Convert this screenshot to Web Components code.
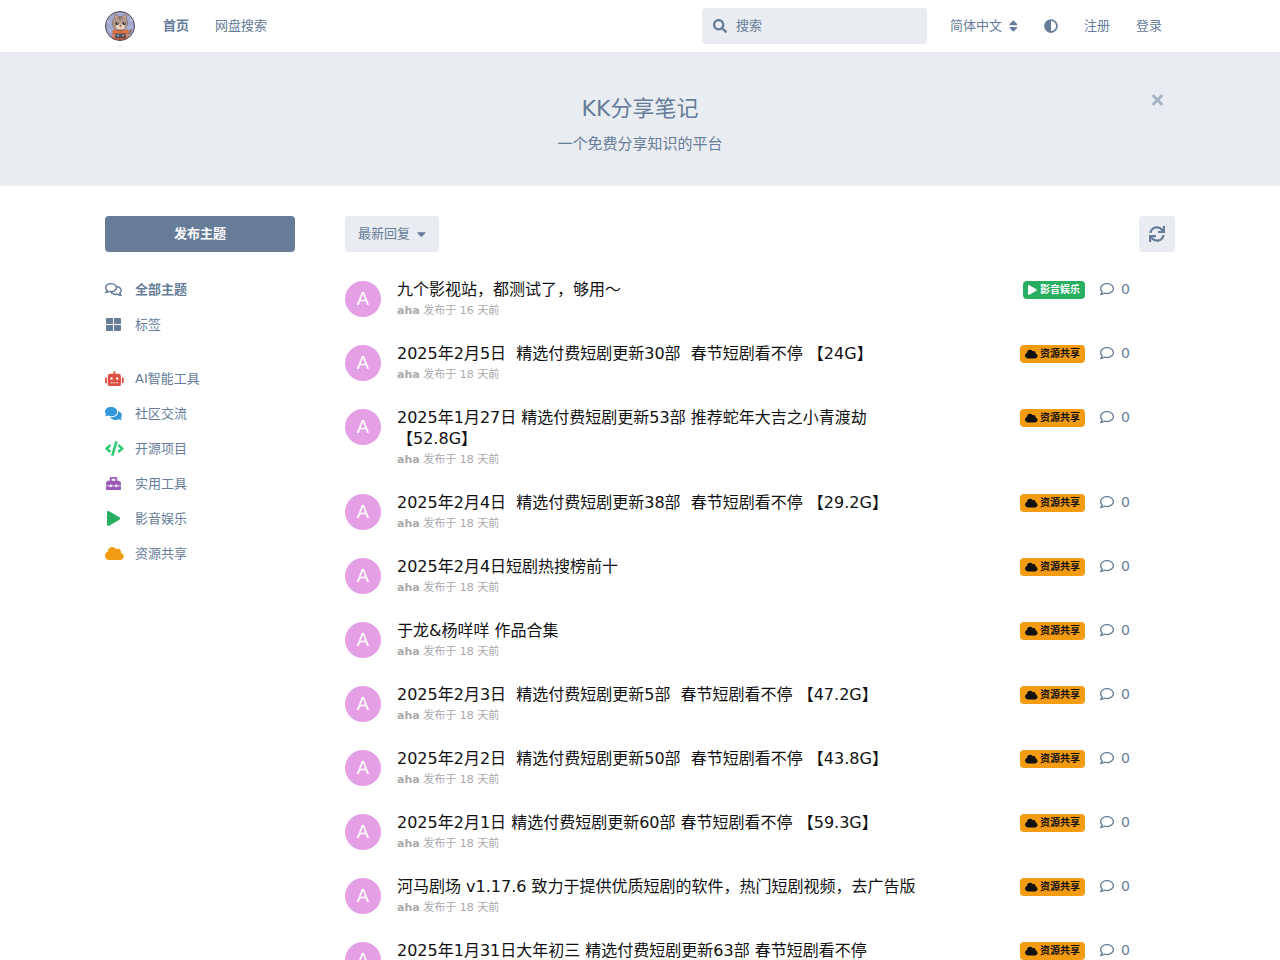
<!DOCTYPE html>
<html lang="zh-Hans">
<head>
<meta charset="utf-8">
<meta name="viewport" content="width=device-width, initial-scale=1">
<title>KK分享笔记</title>
<style>
:root {
  --primary: #667c99;
  --control: #e9ecf1;
  --heading: #111;
  --faint: #aaa;
}
body {
  margin: 0;
  background: #fff;
  color: var(--primary);
  font: 13px/20px "DejaVu Sans", "Noto Sans CJK SC", sans-serif;
}
</style>
</head>
<body>
<site-header>
  <nav-link slot="nav" href="#home" active>首页</nav-link>
  <nav-link slot="nav" href="#search">网盘搜索</nav-link>
  <search-box slot="tools" label="搜索"></search-box>
  <pick-list slot="tools" label="语言" options="简体中文" icon="sort"></pick-list>
  <icon-button slot="tools" icon="adjust" label="切换主题"></icon-button>
  <nav-link slot="tools" href="#signup">注册</nav-link>
  <nav-link slot="tools" href="#login">登录</nav-link>
</site-header>

<welcome-hero>
  <span slot="title">KK分享笔记</span>
  <span slot="text">一个免费分享知识的平台</span>
</welcome-hero>

<forum-layout>
  <forum-sidebar slot="side">
    <side-link icon="comments-o" href="#all" active>全部主题</side-link>
    <side-link icon="grid" href="#tags">标签</side-link>
    <side-link slot="tags" icon="robot" tint="#de4f42" href="#ai">AI智能工具</side-link>
    <side-link slot="tags" icon="comments" tint="#3498db" href="#talk">社区交流</side-link>
    <side-link slot="tags" icon="code" tint="#2ecc71" href="#open">开源项目</side-link>
    <side-link slot="tags" icon="toolbox" tint="#9b59b6" href="#tools">实用工具</side-link>
    <side-link slot="tags" icon="play" tint="#27ae60" href="#media">影音娱乐</side-link>
    <side-link slot="tags" icon="cloud" tint="#f39c12" href="#share">资源共享</side-link>
  </forum-sidebar>
  <list-toolbar></list-toolbar>
  <discussion-item tag="影音娱乐" days="16">九个影视站，都测试了，够用～</discussion-item>
  <discussion-item tag="资源共享" days="18">2025年2月5日&nbsp; 精选付费短剧更新30部&nbsp; 春节短剧看不停 【24G】</discussion-item>
  <discussion-item tag="资源共享" days="18">2025年1月27日 精选付费短剧更新53部 推荐蛇年大吉之小青渡劫 【52.8G】</discussion-item>
  <discussion-item tag="资源共享" days="18">2025年2月4日&nbsp; 精选付费短剧更新38部&nbsp; 春节短剧看不停 【29.2G】</discussion-item>
  <discussion-item tag="资源共享" days="18">2025年2月4日短剧热搜榜前十</discussion-item>
  <discussion-item tag="资源共享" days="18">于龙&amp;杨咩咩 作品合集</discussion-item>
  <discussion-item tag="资源共享" days="18">2025年2月3日&nbsp; 精选付费短剧更新5部&nbsp; 春节短剧看不停 【47.2G】</discussion-item>
  <discussion-item tag="资源共享" days="18">2025年2月2日&nbsp; 精选付费短剧更新50部&nbsp; 春节短剧看不停 【43.8G】</discussion-item>
  <discussion-item tag="资源共享" days="18">2025年2月1日 精选付费短剧更新60部 春节短剧看不停 【59.3G】</discussion-item>
  <discussion-item tag="资源共享" days="18">河马剧场 v1.17.6 致力于提供优质短剧的软件，热门短剧视频，去广告版</discussion-item>
  <discussion-item tag="资源共享" days="18">2025年1月31日大年初三 精选付费短剧更新63部 春节短剧看不停</discussion-item>
</forum-layout>

<script>
const ICONS = {
  search: [512, 'M505 442.7L405.3 343c-4.5-4.5-10.6-7-17-7H372c27.6-35.3 44-79.7 44-128C416 93.1 322.9 0 208 0S0 93.1 0 208s93.1 208 208 208c48.3 0 92.7-16.4 128-44v16.3c0 6.4 2.5 12.5 7 17l99.7 99.7c9.4 9.4 24.6 9.4 33.9 0l28.3-28.3c9.4-9.4 9.4-24.6.1-34zM208 336c-70.7 0-128-57.2-128-128 0-70.7 57.2-128 128-128 70.7 0 128 57.2 128 128 0 70.7-57.2 128-128 128z'],
  sort: [320, 'M41 288h238c21.4 0 32.1 25.9 17 41L177 448c-9.4 9.4-24.6 9.4-33.9 0L24 329c-15.1-15.1-4.4-41 17-41zm255-105L177 64c-9.4-9.4-24.6-9.4-33.9 0L24 183c-15.1 15.1-4.4 41 17 41h238c21.4 0 32.1-25.9 17-41z'],
  caret: [320, 'M31.3 192h257.3c17.8 0 26.7 21.5 14.1 34.1L174.1 354.8c-7.8 7.8-20.5 7.8-28.3 0L17.2 226.1C4.6 213.5 13.5 192 31.3 192z'],
  adjust: [512, 'M8 256c0 137 111 248 248 248s248-111 248-248S393 8 256 8 8 119 8 256zm248 184V72c101.7 0 184 82.3 184 184 0 101.7-82.3 184-184 184z'],
  times: [352, 'M242.72 256l100.07-100.07c12.28-12.28 12.28-32.19 0-44.48l-22.24-22.24c-12.28-12.28-32.19-12.28-44.48 0L176 189.28 75.93 89.21c-12.28-12.28-32.19-12.28-44.48 0L9.21 111.45c-12.28 12.28-12.28 32.19 0 44.48L109.28 256 9.21 356.07c-12.28 12.28-12.28 32.19 0 44.48l22.24 22.24c12.28 12.28 32.2 12.28 44.48 0L176 322.72l100.07 100.07c12.28 12.28 32.2 12.28 44.48 0l22.24-22.24c12.28-12.28 12.28-32.19 0-44.48L242.72 256z'],
  'comments-o': [576, 'M532 386.2c27.5-27.1 44-61.1 44-98.2 0-80-76.5-146.1-176.2-157.9C368.3 72.5 294.3 32 208 32 93.1 32 0 103.6 0 192c0 37 16.5 71 44 98.2-15.3 30.7-37.3 54.5-37.7 54.9-6.3 6.7-8.1 16.5-4.4 25 3.6 8.5 12 14 21.2 14 53.5 0 96.7-20.2 125.2-38.8 9.2 2.1 18.7 3.7 28.4 4.9C208.1 407.6 281.8 448 368 448c20.8 0 40.8-2.4 59.8-6.8C456.3 459.7 499.4 480 553 480c9.2 0 17.5-5.5 21.2-14 3.6-8.5 1.9-18.3-4.4-25-.4-.3-22.5-24.1-37.8-54.8zm-392.8-92.3L122.1 305c-14.1 9.1-28.5 16.3-43.1 21.4 2.7-4.7 5.4-9.7 8-14.8l15.5-31.1L77.7 256C64.2 242.6 48 220.7 48 192c0-60.7 73.3-112 160-112s160 51.3 160 112-73.3 112-160 112c-16.5 0-33-1.9-49-5.6l-19.8-4.5zM498.3 352l-24.7 24.4 15.5 31.1c2.6 5.1 5.3 10.1 8 14.8-14.6-5.1-29-12.3-43.1-21.4l-17.1-11.1-19.9 4.6c-16 3.7-32.5 5.6-49 5.6-54 0-102.2-20.1-131.3-49.7C338 339.5 416 272.9 416 192c0-3.4-.4-6.7-.7-10C479.7 196.5 528 238.8 528 288c0 28.7-16.2 50.6-29.7 64z'],
  grid: [512, 'M296 32h192c13.3 0 24 10.7 24 24v160c0 13.3-10.7 24-24 24H296c-13.3 0-24-10.7-24-24V56c0-13.3 10.7-24 24-24zm-80 0H24C10.7 32 0 42.7 0 56v160c0 13.3 10.7 24 24 24h192c13.3 0 24-10.7 24-24V56c0-13.3-10.7-24-24-24zM0 296v160c0 13.3 10.7 24 24 24h192c13.3 0 24-10.7 24-24V296c0-13.3-10.7-24-24-24H24c-13.3 0-24 10.7-24 24zm296 184h192c13.3 0 24-10.7 24-24V296c0-13.3-10.7-24-24-24H296c-13.3 0-24 10.7-24 24v160c0 13.3 10.7 24 24 24z'],
  robot: [640, 'M32 224H64V416H32A32 32 0 0 1 0 384V256A32 32 0 0 1 32 224Zm512-48V448a64 64 0 0 1-64 64H160a64 64 0 0 1-64-64V176a80 80 0 0 1 80-80H288V32a32 32 0 0 1 64 0V96H464A80 80 0 0 1 544 176ZM264 256a40 40 0 1 0-40 40A40 40 0 0 0 264 256Zm-8 128H192v32h64Zm96 0H288v32h64ZM456 256a40 40 0 1 0-40 40A40 40 0 0 0 456 256Zm-8 128H384v32h64ZM640 256V384a32 32 0 0 1-32 32H576V224h32A32 32 0 0 1 640 256Z'],
  comments: [576, 'M416 192c0-88.4-93.1-160-208-160S0 103.6 0 192c0 34.3 14.1 65.9 38 92-13.4 30.2-35.5 54.2-35.8 54.5-2.2 2.3-2.8 5.7-1.5 8.7S4.8 352 8 352c36.6 0 66.9-12.3 88.7-25 32.2 15.7 70.3 25 111.3 25 114.9 0 208-71.6 208-160zm122 220c23.9-26 38-57.7 38-92 0-66.9-53.5-124.2-129.3-148.1.9 6.6 1.3 13.3 1.3 20.1 0 105.9-107.7 192-240 192-10.8 0-21.3-.8-31.7-1.9C207.8 439.6 281.8 480 368 480c41 0 79.1-9.2 111.3-25 21.8 12.7 52.1 25 88.7 25 3.2 0 6.1-1.9 7.3-4.8 1.3-2.9.7-6.3-1.5-8.7-.3-.3-22.4-24.2-35.8-54.5z'],
  code: [640, 'M278.9 511.5l-61-17.7c-6.4-1.8-10-8.5-8.2-14.9L346.2 8.7c1.8-6.4 8.5-10 14.9-8.2l61 17.7c6.4 1.8 10 8.5 8.2 14.9L293.8 503.3c-1.9 6.4-8.5 10.1-14.9 8.2zm-114-112.2l43.5-46.4c4.6-4.9 4.3-12.7-.8-17.2L117 256l90.6-79.7c5.1-4.5 5.5-12.3.8-17.2l-43.5-46.4c-4.5-4.8-12.1-5.1-17-.5L3.8 247.2c-5.1 4.7-5.1 12.8 0 17.5l144.1 135.1c4.9 4.6 12.5 4.4 17-.5zm327.2.6l144.1-135.1c5.1-4.7 5.1-12.8 0-17.5L492.1 112.1c-4.8-4.5-12.4-4.3-17 .5L431.6 159c-4.6 4.9-4.3 12.7.8 17.2L523 256l-90.6 79.7c-5.1 4.5-5.5 12.3-.8 17.2l43.5 46.4c4.5 4.9 12.1 5.1 17 .6z'],
  toolbox: [512, 'M502.63 214.63l-45.25-45.25c-6-6-14.14-9.38-22.63-9.38H384V80c0-26.51-21.49-48-48-48H176c-26.51 0-48 21.49-48 48v80H77.25c-8.49 0-16.62 3.37-22.63 9.38L9.37 214.63c-6 6-9.37 14.14-9.37 22.63V320h128v-16c0-8.84 7.16-16 16-16h32c8.84 0 16 7.16 16 16v16h128v-16c0-8.84 7.16-16 16-16h32c8.84 0 16 7.16 16 16v16h128v-82.75c0-8.48-3.37-16.62-9.37-22.62zM320 160H192V96h128v64zm64 208c0 8.84-7.16 16-16 16h-32c-8.84 0-16-7.16-16-16v-16H192v16c0 8.84-7.16 16-16 16h-32c-8.84 0-16-7.16-16-16v-16H0v96c0 17.67 14.33 32 32 32h448c17.67 0 32-14.33 32-32v-96H384v16z'],
  play: [448, 'M424.4 214.7L72.4 6.6C43.8-10.3 0 6.1 0 47.9V464c0 37.5 40.7 60.1 72.4 41.3l352-208c31.4-18.5 31.5-64.1 0-82.6z'],
  cloud: [640, 'M537.6 226.6c4.1-10.7 6.4-22.4 6.4-34.6 0-53-43-96-96-96-19.7 0-38.1 6-53.3 16.2C367 64.2 315.3 32 256 32c-88.4 0-160 71.6-160 160 0 2.7.1 5.4.2 8.1C40.2 219.8 0 273.2 0 336c0 79.5 64.5 144 144 144h368c70.7 0 128-57.3 128-128 0-61.9-44-113.6-102.4-125.4z'],
  sync: [512, 'M440.65 12.57l4 82.77A247.16 247.16 0 0 0 255.83 8C134.73 8 33.91 94.92 12.29 209.82A12 12 0 0 0 24.09 224h49.05a12 12 0 0 0 11.67-9.26 175.91 175.91 0 0 1 317-56.94l-101.46-4.86a12 12 0 0 0-12.57 12v47.41a12 12 0 0 0 12 12H500a12 12 0 0 0 12-12V12a12 12 0 0 0-12-12h-47.37a12 12 0 0 0-11.98 12.57zM255.83 432a175.61 175.61 0 0 1-146-77.8l101.8 4.87a12 12 0 0 0 12.57-12v-47.4a12 12 0 0 0-12-12H12a12 12 0 0 0-12 12V500a12 12 0 0 0 12 12h47.35a12 12 0 0 0 12-12.6l-4.15-82.57A247.17 247.17 0 0 0 255.83 504c121.11 0 221.93-86.92 243.55-201.82a12 12 0 0 0-11.8-14.18h-49.05a12 12 0 0 0-11.67 9.26A175.86 175.86 0 0 1 255.83 432z'],
  comment: [512, 'M256 32C114.6 32 0 125.1 0 240c0 47.6 19.9 91.2 52.9 126.3C38 405.7 7 439.1 6.5 439.5c-6.6 7-8.4 17.2-4.6 26S14.4 480 24 480c61.5 0 110-25.7 139.1-46.3C192 442.8 223.2 448 256 448c141.4 0 256-93.1 256-208S397.4 32 256 32zm0 368c-26.7 0-53.1-4.1-78.4-12.1l-22.7-7.2-19.5 13.8c-14.3 10.1-33.9 21.4-57.5 29 7.3-12.1 14.4-25.7 19.9-40.2l10.6-28.1-20.6-21.8C69.7 314.1 48 282.2 48 240c0-88.2 93.3-160 208-160s208 71.8 208 160-93.3 160-208 160z']
};

// Icon height follows --size; the width follows the glyph's own ratio.
const icon = name => {
  const [w, d] = ICONS[name];
  return `<svg class="icon" viewBox="0 0 ${w} 512" aria-hidden="true"><path fill="currentColor" d="${d}"/></svg>`;
};

const BASE = `
  *, *::before { box-sizing: border-box; }
  :host { display: block; box-sizing: border-box; }
  :host([hidden]) { display: none; }
  .icon { height: var(--size, 14px); width: auto; flex: none; display: block; overflow: visible; }
  a { color: inherit; text-decoration: none; }
  button, input, select { font: inherit; color: inherit; border: 0; margin: 0; }
  button, select { cursor: pointer; }
`;

const define = (tag, render, setup) => customElements.define(tag, class extends HTMLElement {
  connectedCallback() {
    if (this.shadowRoot) return;
    const root = this.attachShadow({ mode: 'open' });
    const { css, html } = render(this);
    root.innerHTML = `<style>${BASE}${css}</style>${html}`;
    if (setup) setup(this, root);
  }
});

define('site-logo', () => ({
  css: `:host { width: 30px; height: 30px; } svg { display: block; width: 100%; height: 100%; }`,
  html: `<a href="#home" aria-label="KK分享笔记"><svg viewBox="0 0 60 60" aria-hidden="true">
    <defs><clipPath id="disc"><circle cx="30" cy="30" r="28"/></clipPath></defs>
    <circle cx="30" cy="30" r="29" fill="#a4a9cf" stroke="#4b4252" stroke-width="2"/>
    <g clip-path="url(#disc)">
      <path d="M4 20l5 3M50 16l4 3M9 38l3 2M49 34l4-2" stroke="#dcdff0" stroke-width="2"/>
      <path d="M45 46q7-2 6-9" fill="none" stroke="#8a6450" stroke-width="4"/>
      <path d="M13 58q-1-16 9-20h17q9 5 8 20z" fill="#b65338"/>
      <path d="M18 14l2-8 8 5h6l8-5 1 9q4 7 1 14-4 9-15 9t-14-9q-2-8 3-15z" fill="#b09588" stroke="#75605a" stroke-width="1"/>
      <path d="M20 13l1-5 4 4zM41 13l0-5-5 4z" fill="#dfa391"/>
      <path d="M28 11l1 6M33 11l-1 6" stroke="#75605a" stroke-width="2"/>
      <ellipse cx="31" cy="31" rx="9" ry="6" fill="#ead2bd"/>
      <circle cx="24" cy="25" r="3" fill="#30272c"/><circle cx="38" cy="25" r="3" fill="#30272c"/>
      <circle cx="25" cy="24" r="1" fill="#fff"/><circle cx="39" cy="24" r="1" fill="#fff"/>
      <path d="M29 28h4l-2 2zM31 30v3" fill="#76433c" stroke="#76433c"/>
      <path d="M17 36q14 8 28 0l3 6q-17 9-34 0z" fill="#d87343"/>
      <rect x="19" y="45" width="24" height="9" rx="4" fill="#4c5262"/>
      <circle cx="26" cy="49" r="2" fill="#a3b0bd"/><circle cx="36" cy="49" r="2" fill="#cf8870"/>
      <circle cx="17" cy="49" r="4" fill="#c38c70"/><circle cx="45" cy="49" r="4" fill="#c38c70"/>
    </g></svg></a>`
}));

define('nav-link', el => ({
  css: `a { display: block; padding: 8px 13px; white-space: nowrap; }
        :host([active]) a { font-weight: 700; }`,
  html: `<a href="${el.getAttribute('href')}"><slot></slot></a>`
}));

define('icon-button', el => ({
  css: `button { display: flex; align-items: center; justify-content: center; height: 36px; min-width: 36px;
          padding: 0 var(--pad, 13px); border-radius: 4px; background: var(--face, transparent); }`,
  html: `<button type="button" aria-label="${el.getAttribute('label')}">${icon(el.getAttribute('icon'))}</button>`
}));

define('search-box', el => ({
  css: `:host { flex: 0 1 225px; margin-right: 10px; }
        label { display: flex; align-items: center; gap: 9px; height: 36px; padding: 0 11px; border-radius: 4px; background: var(--control); }
        input { flex: 1; min-width: 0; padding: 0; background: none; outline: none; }
        input::placeholder { color: inherit; opacity: 1; }`,
  html: `<label>${icon('search')}<input type="search" placeholder="${el.getAttribute('label')}" aria-label="${el.getAttribute('label')}"></label>`
}));

define('pick-list', el => ({
  css: `:host { position: relative; }
        select { appearance: none; display: block; height: 36px; padding: 0 29px 0 13px; border-radius: 4px; background: var(--face, transparent); }
        select { padding-right: 28px; }
        .icon { position: absolute; right: 13px; top: 11px; pointer-events: none; }`,
  html: `<select aria-label="${el.getAttribute('label')}">${el.getAttribute('options').split(',').map(o => `<option>${o}</option>`).join('')}</select>${icon(el.getAttribute('icon'))}`
}));

define('site-header', () => ({
  css: `:host { background: #fff; }
        header { display: flex; align-items: center; max-width: 1100px; height: 52px; margin: 0 auto; padding: 0 15px; }
        nav { display: flex; margin-left: 15px; }
        .tools { display: flex; align-items: center; flex: 1; justify-content: flex-end; }`,
  html: `<header><site-logo></site-logo><nav><slot name="nav"></slot></nav><div class="tools"><slot name="tools"></slot></div></header>`
}));

define('welcome-hero', () => ({
  css: `:host { background: var(--control); text-align: center; }
        .inner { display: grid; grid-template-columns: 36px 1fr 36px; max-width: 1100px; margin: 0 auto; padding: 30px 15px; }
        .copy { grid-column: 2; padding: 12px 0 2px; }
        h2 { margin: 0; font-size: 22px; line-height: 30px; font-weight: 400; }
        p { margin: 10px 0 0; font-size: 15px; line-height: 20px; }
        icon-button { --size: 16px; --pad: 0; opacity: .5; }`,
  html: `<div class="inner"><div class="copy"><h2><slot name="title"></slot></h2><p><slot name="text"></slot></p></div>
    <icon-button icon="times" label="关闭"></icon-button></div>`
}), (el, root) => root.querySelector('icon-button').addEventListener('click', () => { el.hidden = true; }));

define('forum-layout', () => ({
  css: `:host { display: grid; grid-template-columns: 190px minmax(0, 1fr); gap: 50px; max-width: 1100px; margin: 0 auto; padding: 30px 15px; }`,
  html: `<slot name="side"></slot><main><slot></slot></main>`
}));

define('forum-sidebar', () => ({
  css: `button { width: 100%; height: 36px; border-radius: 4px; background: var(--primary); color: #fff; font-weight: 700; }
        nav { margin-top: 20px; }
        .tags { margin-top: 19px; }`,
  html: `<button type="button">发布主题</button><nav><slot></slot><div class="tags"><slot name="tags"></slot></div></nav>`
}));

define('side-link', el => ({
  css: `a { display: grid; grid-template-columns: 30px 1fr; align-items: center; height: 35px; }
        :host([active]) a { font-weight: 700; }
        .mark { display: flex; justify-content: center; justify-self: start; min-width: 17px; --size: 15px; color: ${el.getAttribute('tint') || 'inherit'}; }`,
  html: `<a href="${el.getAttribute('href')}"><span class="mark">${icon(el.getAttribute('icon'))}</span><span><slot></slot></span></a>`
}));

define('list-toolbar', () => ({
  css: `:host { display: flex; justify-content: space-between; margin-bottom: 17px; --face: var(--control); }
        icon-button { --size: 16px; --pad: 0; }`,
  html: `<pick-list label="排序" options="最新回复,热门主题,最新主题,最早主题" icon="caret"></pick-list>
    <icon-button icon="sync" label="刷新"></icon-button>`
}));

const TAGS = {
  '影音娱乐': { icon: 'play', back: '#27ae60', ink: '#fff' },
  '资源共享': { icon: 'cloud', back: '#f39c12', ink: '#111' }
};

define('tag-label', el => {
  const tag = TAGS[el.getAttribute('name')];
  return {
    css: `a { display: flex; align-items: center; gap: 3px; height: 18px; padding: 0 5px; border-radius: 4px; white-space: nowrap;
            background: ${tag.back}; color: ${tag.ink}; font-size: 10px; line-height: 18px; font-weight: 700; --size: 10px; }`,
    html: `<a href="#tag">${icon(tag.icon)}${el.getAttribute('name')}</a>`
  };
});

define('discussion-item', el => ({
  css: `article { display: flex; align-items: flex-start; padding: 10px 0 11px; }
        .avatar { flex: none; width: 36px; height: 36px; margin: 2px 16px 0 0; border-radius: 50%; background: #e5a0e5; color: #fff;
          font-size: 18px; line-height: 36px; text-align: center; }
        .main { flex: 1; min-width: 0; padding-right: 80px; }
        h3 { margin: 0; font-size: 16px; line-height: 21px; font-weight: 400; color: var(--heading); }
        p { margin: 0; font-size: 11px; line-height: 22px; color: var(--faint); }
        tag-label { margin-top: 2px; }
        .count { display: flex; align-items: center; gap: 7px; width: 75px; margin-left: 15px; height: 20px; font-size: 14px; }`,
  html: `<article>
    <a class="avatar" href="#aha" aria-label="aha">A</a>
    <div class="main"><h3><a href="#discussion"><slot></slot></a></h3><p><b>aha</b> 发布于 ${el.getAttribute('days')} 天前</p></div>
    <tag-label name="${el.getAttribute('tag')}"></tag-label>
    <span class="count">${icon('comment')}<span>0</span></span>
  </article>`
}));
</script>
</body>
</html>
